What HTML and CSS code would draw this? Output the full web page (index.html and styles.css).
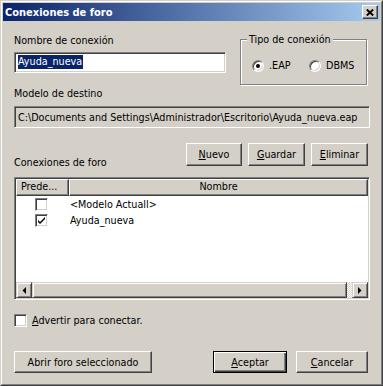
FILE: index.html
```html
<!DOCTYPE html>
<html>
<head>
<meta charset="utf-8">
<title>Conexiones de foro</title>
<link rel="stylesheet" href="styles.css">
</head>
<body>
<div class="window">
  <div class="frame">
    <div class="titlebar">
      <span class="title">Conexiones de foro</span>
      <span class="close"><svg width="8" height="7" viewBox="0 0 8 7"><path d="M0.8 0.5 L7.2 6.5 M7.2 0.5 L0.8 6.5" stroke="#000" stroke-width="1.9" fill="none"/></svg></span>
    </div>
    <div class="content">
      <div class="toprow">
        <div class="namecol">
          <div class="label">Nombre de conexión</div>
          <div class="field white"><span class="sel">Ayuda_nueva</span></div>
        </div>
        <div class="group">
          <span class="legend">Tipo de conexión</span>
          <div class="radios">
            <span class="radio first"><span class="rb checked"></span>.EAP</span>
            <span class="radio"><span class="rb"></span>DBMS</span>
          </div>
        </div>
      </div>

      <div class="label dest">Modelo de destino</div>
      <div class="field gray path">C:\Documents and Settings\Administrador\Escritorio\Ayuda_nueva.eap</div>

      <div class="btnrow">
        <div class="label conn">Conexiones de foro</div>
        <div class="btns">
          <button class="btn w56"><u>N</u>uevo</button>
          <button class="btn w57"><u>G</u>uardar</button>
          <button class="btn w57"><u>E</u>liminar</button>
        </div>
      </div>

      <div class="list">
        <div class="lhead">
          <div class="hcell c1">Prede...</div>
          <div class="hcell c2">Nombre</div>
        </div>
        <div class="lbody">
          <div class="lrow">
            <div class="lc1"><span class="cb"></span></div>
            <div class="lc2">&lt;Modelo Actuall&gt;</div>
          </div>
          <div class="lrow">
            <div class="lc1"><span class="cb"><svg width="9" height="9" viewBox="0 0 9 9"><path d="M1 4 L3 6 L8 1 L8 3 L3 8 L1 6 Z" fill="#000"/></svg></span></div>
            <div class="lc2">Ayuda_nueva</div>
          </div>
        </div>
        <div class="hscroll">
          <div class="sbtn"><svg width="4" height="7" viewBox="0 0 4 7"><path d="M4 0 L4 7 L0.5 3.5 Z" fill="#000"/></svg></div>
          <div class="thumb"></div>
          <div class="track"></div>
          <div class="sbtn"><svg width="4" height="7" viewBox="0 0 4 7"><path d="M0 0 L0 7 L3.5 3.5 Z" fill="#000"/></svg></div>
        </div>
      </div>

      <div class="warn">
        <span class="cb"></span>
        <span><u>A</u>dvertir para conectar.</span>
      </div>

      <div class="bottom">
        <button class="btn abrir">Abrir foro seleccionado</button>
        <button class="btn def aceptar"><u>A</u>ceptar</button>
        <button class="btn cancelar"><u>C</u>ancelar</button>
      </div>
    </div>
  </div>
</div>
</body>
</html>
```

FILE: styles.css
```css
html, body {
  margin: 0;
  padding: 0;
  background: #d4d0c8;
}
body {
  font-family: "DejaVu Sans Condensed", "Liberation Sans", sans-serif;
  font-size: 10.7px;
  line-height: 13px;
  color: #000;
}
.window {
  width: 383px;
  height: 386px;
  box-sizing: border-box;
  border: 1px solid;
  border-color: #d4d0c8 #404040 #404040 #d4d0c8;
  background: #d4d0c8;
}
.frame {
  height: 100%;
  box-sizing: border-box;
  border: 1px solid;
  border-color: #fff #808080 #808080 #fff;
  padding: 1px;
  display: flex;
  flex-direction: column;
}
.titlebar {
  height: 18px;
  flex: none;
  background: linear-gradient(to right, #0a246a, #a6caf0);
  display: flex;
  align-items: center;
  justify-content: space-between;
  padding: 0 2px 0 2px;
  color: #fff;
  font-weight: bold;
  font-size: 11px;
}
.close {
  width: 16px;
  height: 14px;
  box-sizing: border-box;
  border: 1px solid;
  border-color: #fff #404040 #404040 #fff;
  box-shadow: inset -1px -1px #808080;
  background: #d4d0c8;
  display: flex;
  align-items: center;
  justify-content: center;
  padding-right: 1px;
}
.close svg { display: block; }
.content {
  padding: 13px 10px 0 11px;
}
.label {
  height: 13px;
  white-space: nowrap;
}
.toprow {
  display: flex;
  align-items: flex-start;
}
.namecol {
  width: 212px;
  display: flex;
  flex-direction: column;
  gap: 5px;
}
.field {
  box-sizing: border-box;
  border: 1px solid;
  border-color: #808080 #fff #fff #808080;
  box-shadow: inset 1px 1px #404040, inset -1px -1px #d4d0c8;
  white-space: nowrap;
  overflow: hidden;
}
.field.white {
  height: 21px;
  background: #fff;
  padding: 2px 0 0 3px;
}
.sel {
  display: inline-block;
  background: #0a246a;
  color: #fff;
  line-height: 14px;
  padding: 0 1px 0 0;
}
.group {
  position: relative;
  margin-left: 14px;
  margin-top: 5px;
  width: 127px;
  height: 46px;
  box-sizing: border-box;
  border: 1px solid #808080;
  box-shadow: inset 1px 1px #fff, 1px 1px #fff;
}
.legend {
  position: absolute;
  top: -7px;
  left: 6px;
  padding: 0 2px;
  background: #d4d0c8;
  line-height: 13px;
  white-space: nowrap;
}
.radios {
  display: flex;
  padding: 19px 0 0 11px;
}
.radio {
  display: flex;
  align-items: center;
  white-space: nowrap;
}
.radio.first {
  width: 57px;
}
.rb {
  position: relative;
  width: 12px;
  height: 12px;
  box-sizing: border-box;
  border-radius: 50%;
  border: 1px solid;
  border-color: #808080 #fff #fff #808080;
  box-shadow: inset 1px 1px #404040, inset -1px -1px #d4d0c8;
  background: #fff;
  margin-right: 5px;
  flex: none;
}
.rb.checked::after {
  content: "";
  position: absolute;
  left: 3px;
  top: 3px;
  width: 4px;
  height: 4px;
  border-radius: 50%;
  background: #000;
}
.label.dest {
  margin-top: 2px;
}
.field.gray {
  margin-top: 6px;
  height: 22px;
  background: #d4d0c8;
  padding: 4px 0 0 3px;
}
.btnrow {
  display: flex;
  align-items: flex-start;
  margin-top: 15px;
}
.label.conn {
  margin-top: 13px;
}
.btns {
  margin-left: auto;
  display: flex;
  gap: 6px;
  padding-right: 2px;
}
.btn {
  height: 23px;
  box-sizing: border-box;
  border: 1px solid;
  border-color: #fff #404040 #404040 #fff;
  box-shadow: inset -1px -1px #808080;
  background: #d4d0c8;
  font: inherit;
  color: #000;
  padding: 0;
  margin: 0;
  display: flex;
  align-items: center;
  justify-content: center;
}
.w56 { width: 56px; }
.w57 { width: 57px; }
.list {
  margin-top: 8px;
  height: 123px;
  box-sizing: border-box;
  border: 1px solid;
  border-color: #808080 #fff #fff #808080;
  box-shadow: inset 1px 1px #404040, inset -1px -1px #d4d0c8;
  padding: 1px;
  background: #fff;
  display: flex;
  flex-direction: column;
}
.lhead {
  display: flex;
  height: 17px;
  flex: none;
}
.hcell {
  box-sizing: border-box;
  height: 17px;
  border: 1px solid;
  border-color: #fff #404040 #404040 #fff;
  box-shadow: inset -1px -1px #808080;
  background: #d4d0c8;
  line-height: 14px;
  white-space: nowrap;
}
.hcell.c1 {
  width: 53px;
  padding-left: 4px;
}
.hcell.c2 {
  flex: 1;
  text-align: center;
}
.lbody {
  flex: 1;
}
.lrow {
  height: 16px;
  display: flex;
  align-items: center;
}
.lc1 {
  width: 53px;
  padding-left: 19px;
  box-sizing: border-box;
  display: flex;
  align-items: center;
}
.lc2 {
  padding-left: 1px;
  white-space: nowrap;
}
.cb {
  width: 13px;
  height: 13px;
  box-sizing: border-box;
  border: 1px solid;
  border-color: #808080 #fff #fff #808080;
  box-shadow: inset 1px 1px #404040, inset -1px -1px #d4d0c8;
  background: #fff;
  display: flex;
  align-items: center;
  justify-content: center;
  flex: none;
}
.cb svg { display: block; }
.hscroll {
  height: 16px;
  display: flex;
  flex: none;
}
.sbtn {
  width: 16px;
  height: 16px;
  box-sizing: border-box;
  border: 1px solid;
  border-color: #d4d0c8 #404040 #404040 #d4d0c8;
  box-shadow: inset 1px 1px #fff, inset -1px -1px #808080;
  background: #d4d0c8;
  display: flex;
  align-items: center;
  justify-content: center;
}
.thumb {
  width: 315px;
  height: 16px;
  box-sizing: border-box;
  border: 1px solid;
  border-color: #d4d0c8 #404040 #404040 #d4d0c8;
  box-shadow: inset 1px 1px #fff, inset -1px -1px #808080;
  background: #d4d0c8;
}
.track {
  flex: 1;
  background: repeating-conic-gradient(#fff 0 25%, #d4d0c8 0 50%) 0 0 / 2px 2px;
}
.warn {
  margin-top: 14px;
  display: flex;
  align-items: center;
  gap: 5px;
  height: 13px;
}
.bottom {
  margin-top: 24px;
  display: flex;
  padding-right: 2px;
}
.bottom .btn {
  height: 22px;
}
.abrir { width: 138px; }
.aceptar {
  width: 74px;
  margin-left: auto;
}
.btn.def {
  border: 1px solid #000;
  box-shadow: inset 1px 1px #fff, inset -1px -1px #404040, inset -2px -2px #808080;
}
.cancelar {
  width: 72px;
  margin-left: 9px;
}
```
